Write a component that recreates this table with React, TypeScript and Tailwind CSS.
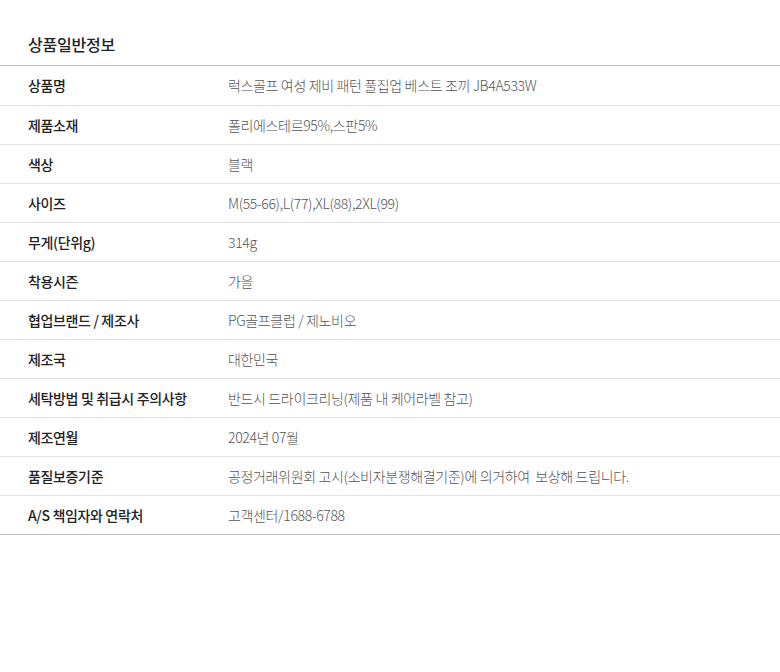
const rows: [string, string][] = [
  ["상품명", "럭스골프 여성 제비 패턴 풀집업 베스트 조끼 JB4A533W"],
  ["제품소재", "폴리에스테르95%,스판5%"],
  ["색상", "블랙"],
  ["사이즈", "M(55-66),L(77),XL(88),2XL(99)"],
  ["무게(단위g)", "314g"],
  ["착용시즌", "가을"],
  ["협업브랜드 / 제조사", "PG골프클럽 / 제노비오"],
  ["제조국", "대한민국"],
  ["세탁방법 및 취급시 주의사항", "반드시 드라이크리닝(제품 내 케어라벨 참고)"],
  ["제조연월", "2024년 07월"],
  ["품질보증기준", "공정거래위원회 고시(소비자분쟁해결기준)에 의거하여  보상해 드립니다."],
  ["A/S 책임자와 연락처", "고객센터/1688-6788"],
];

export default function App() {
  return (
    <div
      className="min-h-[672px] w-[780px] bg-white"
      style={{ fontFamily: '"Noto Sans CJK KR", "Noto Sans", sans-serif' }}
    >
      <h2 className="flex h-[65px] items-center pl-7 pt-[22px] text-[16px] font-medium tracking-[-0.2px] text-[#222]">
        상품일반정보
      </h2>
      <div className="border-y border-[#bdbdbd]">
        {rows.map(([label, value], i) => (
          <div
            key={label}
            className={`flex h-[39px] items-center tracking-[-0.35px] ${i > 0 ? "border-t border-[#e3e3e3]" : ""}`}
          >
            <div className="w-[228px] shrink-0 pl-7 text-[14px] font-medium text-[#222]">
              {label}
            </div>
            <div className="whitespace-pre text-[14px] font-light text-[#555]">{value}</div>
          </div>
        ))}
      </div>
    </div>
  );
}
